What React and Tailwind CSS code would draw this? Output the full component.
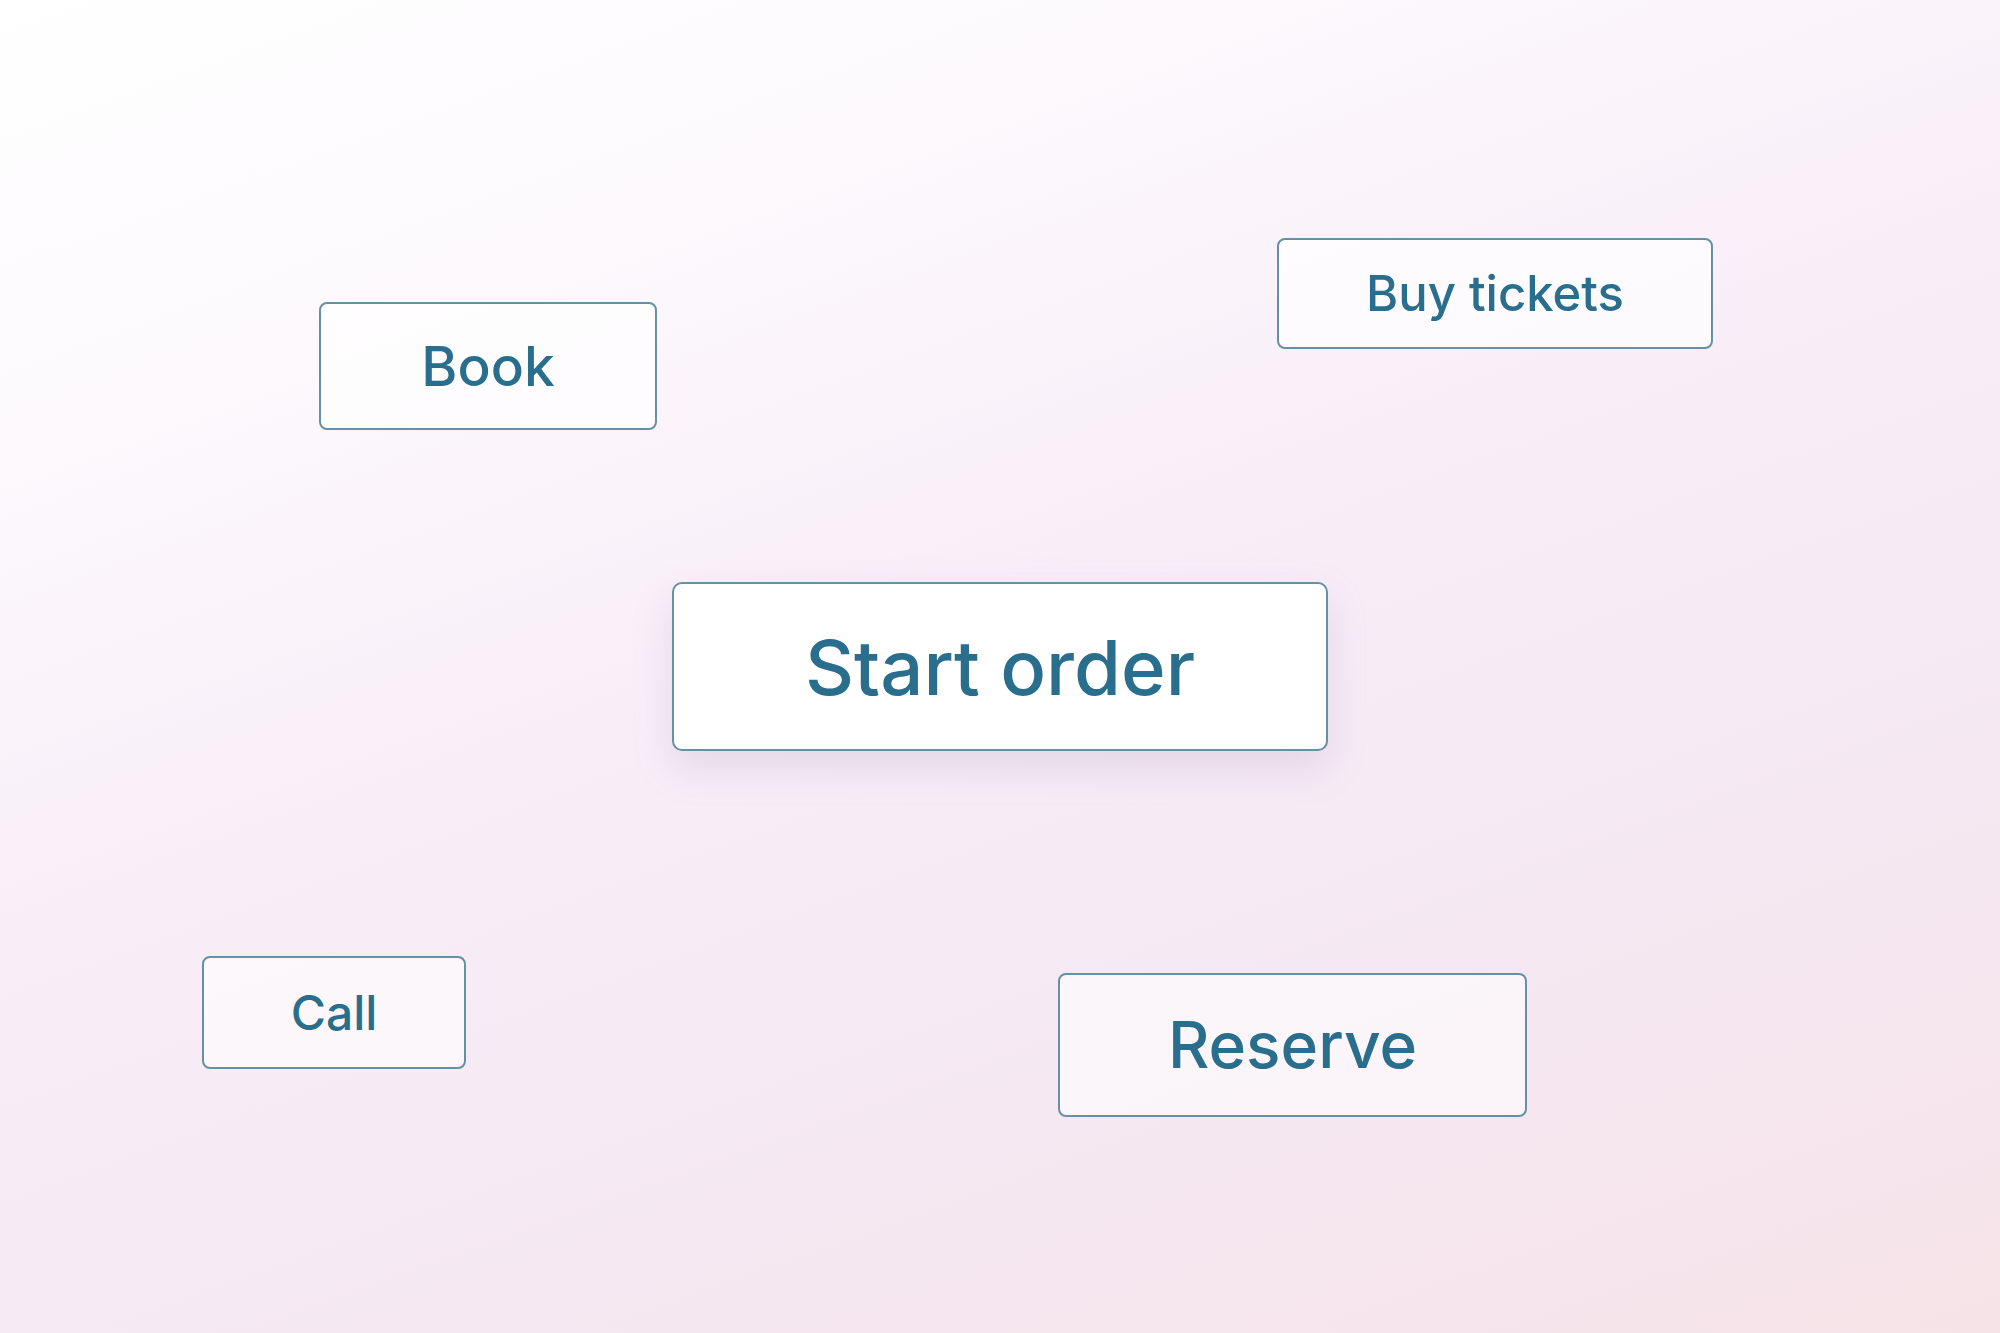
import React from 'react';

const buttons = [
    { label: 'Book', pos: 'left-[319px] top-[302px] w-[338px] h-[128px]', text: 'text-[55px]', bg: 'bg-white/70' },
    { label: 'Buy tickets', pos: 'left-[1277px] top-[238px] w-[436px] h-[111px]', text: 'text-[49px]', bg: 'bg-white/70' },
    { label: 'Call', pos: 'left-[202px] top-[956px] w-[264px] h-[113px]', text: 'text-[48px]', bg: 'bg-white/60' },
    { label: 'Reserve', pos: 'left-[1058px] top-[973px] w-[469px] h-[144px]', text: 'text-[64px]', bg: 'bg-white/60' },
];

const App = () => {
    return (
        <div
            className="relative w-[2000px] h-[1333px] overflow-hidden bg-[linear-gradient(160deg,#ffffff_0%,#fdfafd_20%,#f8eef8_46%,#f5e8f2_72%,#f6e3e8_100%)]"
            style={{ fontFamily: 'Inter, "Noto Sans", sans-serif' }}
        >
            {buttons.map(b => (
                <button
                    key={b.label}
                    className={`absolute ${b.pos} ${b.bg} ${b.text} flex items-center justify-center rounded-[8px] border-2 border-[#6590a5] font-medium text-[#2a6e8e] leading-none`}
                >
                    {b.label}
                </button>
            ))}

            {/* primary action, centred and lifted */}
            <button className="absolute left-[672px] top-[582px] w-[656px] h-[169px] flex items-center justify-center rounded-[10px] border-2 border-[#6590a5] bg-white text-[76px] font-medium text-[#2a6e8e] leading-none shadow-[0_16px_40px_rgba(150,110,160,0.18)]">
                Start order
            </button>
        </div>
    );
};

export default App;
